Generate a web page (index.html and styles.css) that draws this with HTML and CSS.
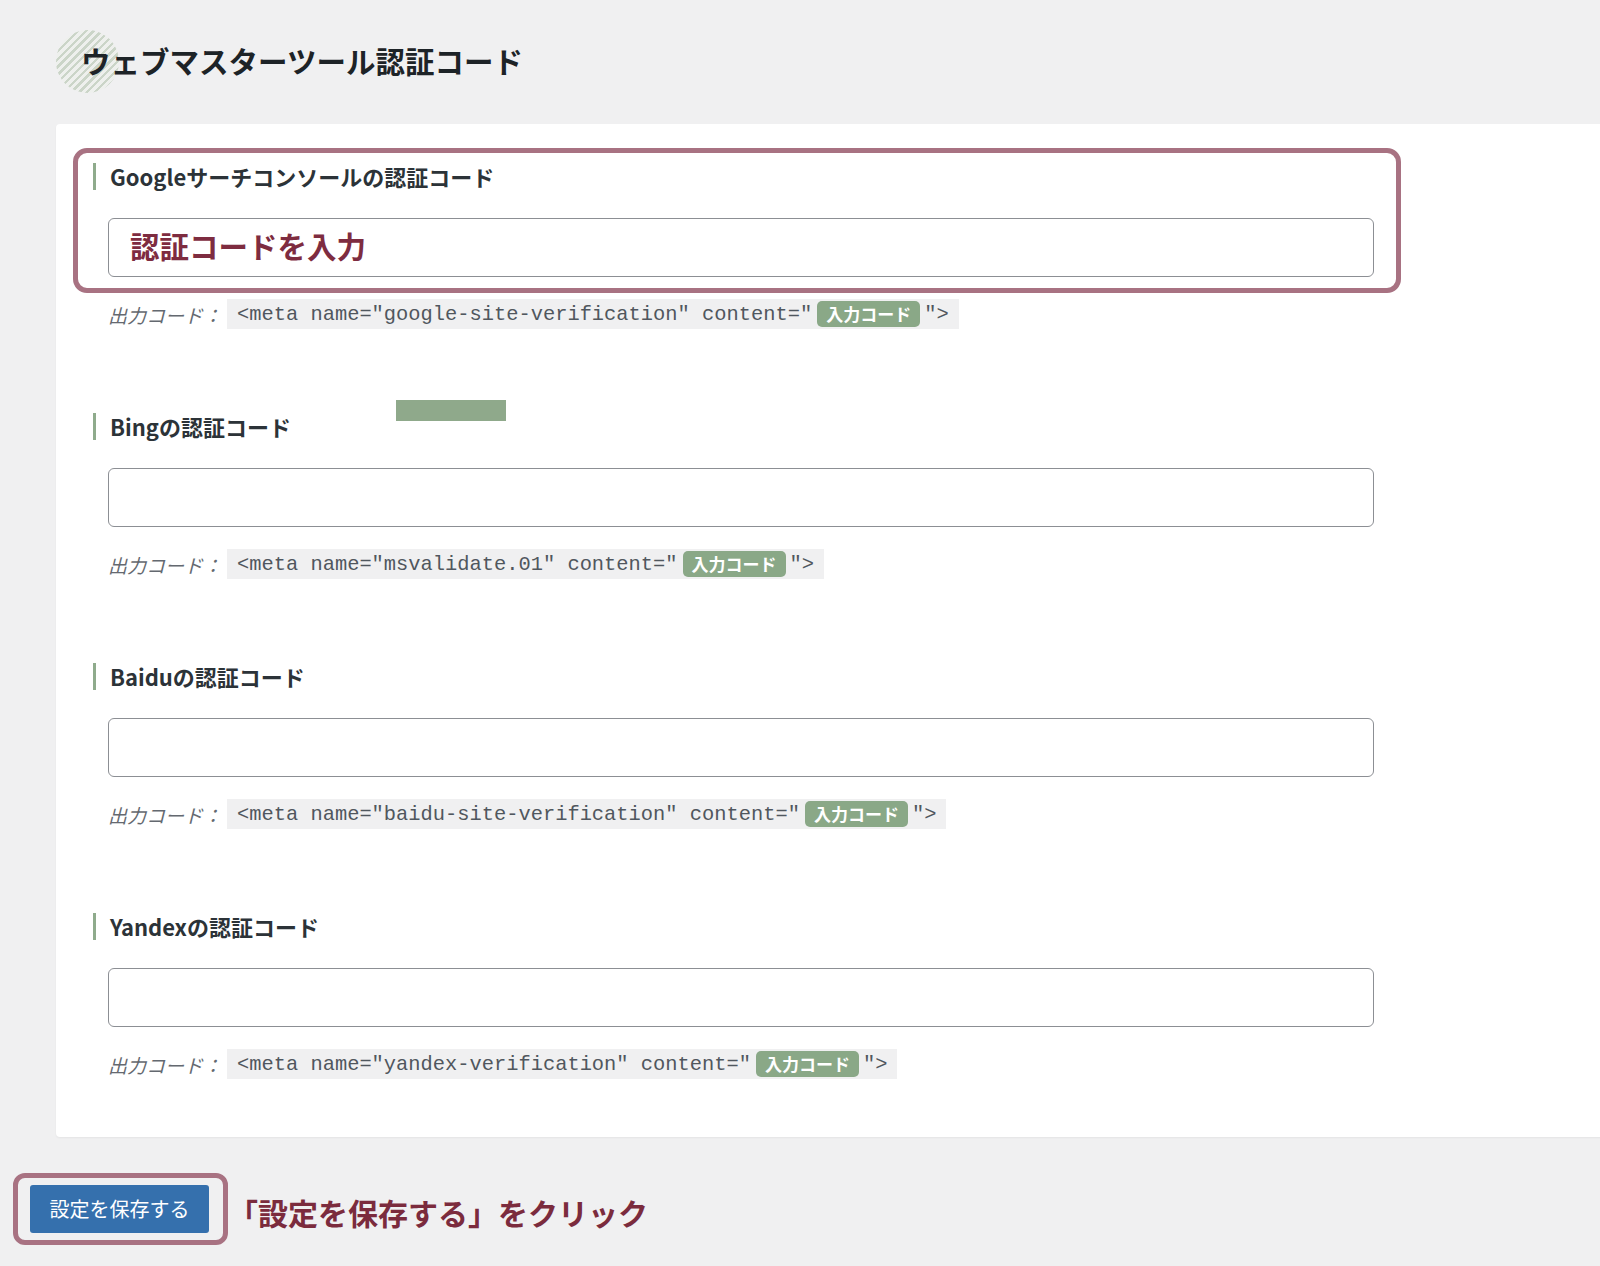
FILE: index.html
```html
<!DOCTYPE html>
<html lang="ja">
<head>
<meta charset="utf-8">
<title>ウェブマスターツール認証コード</title>
<link rel="stylesheet" href="styles.css">
</head>
<body>
<div class="page">
  <h1 class="title">ウェブマスターツール認証コード</h1>

  <div class="card">
    <div class="group">
      <div class="field highlight">
        <div class="field-label">Googleサーチコンソールの認証コード</div>
        <div class="input"><span class="typed">認証コードを入力</span></div>
      </div>
      <div class="output">
        <span class="output-label">出力コード：</span><span class="code">&lt;meta name="google-site-verification" content="<span class="badge">入力コード</span>"&gt;</span>
      </div>
    </div>

    <div class="group">
      <div class="field">
        <div class="field-label">Bingの認証コード</div>
        <div class="input"></div>
      </div>
      <div class="output">
        <span class="output-label">出力コード：</span><span class="code">&lt;meta name="msvalidate.01" content="<span class="badge">入力コード</span>"&gt;</span>
      </div>
    </div>

    <div class="group">
      <div class="field">
        <div class="field-label">Baiduの認証コード</div>
        <div class="input"></div>
      </div>
      <div class="output">
        <span class="output-label">出力コード：</span><span class="code">&lt;meta name="baidu-site-verification" content="<span class="badge">入力コード</span>"&gt;</span>
      </div>
    </div>

    <div class="group">
      <div class="field">
        <div class="field-label">Yandexの認証コード</div>
        <div class="input"></div>
      </div>
      <div class="output">
        <span class="output-label">出力コード：</span><span class="code">&lt;meta name="yandex-verification" content="<span class="badge">入力コード</span>"&gt;</span>
      </div>
    </div>
  </div>

  <div class="actions">
    <div class="btn-frame"><button class="btn">設定を保存する</button></div>
    <span class="note">「設定を保存する」をクリック</span>
  </div>

  <div class="mark"></div>
</div>
</body>
</html>
```

FILE: styles.css
```css
* { box-sizing: border-box; }

html, body {
  margin: 0;
  padding: 0;
  background: #f0f0f1;
  font-family: "Noto Sans", "Noto Sans CJK JP", sans-serif;
  color: #1d2327;
}

.page {
  position: relative;
  width: 1600px;
  min-height: 1266px;
  padding-top: 30px;
  overflow: hidden;
}

.title {
  position: relative;
  z-index: 0;
  margin: 0 0 31px 55px;
  height: 63px;
  padding-left: 26px;
  padding-bottom: 3px;
  display: flex;
  align-items: center;
  font-family: "Noto Sans CJK JP", sans-serif;
  font-size: 29.5px;
  font-weight: 700;
  color: #1d2327;
}

.title::before {
  content: "";
  position: absolute;
  z-index: -1;
  left: 1px;
  top: 0;
  width: 63px;
  height: 63px;
  border-radius: 50%;
  background: repeating-linear-gradient(-45deg, #cbd5c8 0 2.5px, #eef0ed 2.5px 5.5px);
}

.card {
  margin-left: 56px;
  width: 1560px;
  background: #ffffff;
  border-radius: 4px 0 0 4px;
  box-shadow: 0 1px 2px rgba(0, 0, 0, 0.05);
  padding: 24px 0 58px 17px;
}

.group + .group {
  margin-top: 69px;
}

.field {
  width: 1328px;
  border: 5px solid transparent;
  border-radius: 14px;
  padding: 10px 22px 11px 15px;
}

.field.highlight {
  border-color: #a87282;
}

.field-label {
  border-left: 3px solid #8fab8c;
  padding-left: 14px;
  height: 27px;
  line-height: 27px;
  font-family: "Noto Sans CJK JP", sans-serif;
  font-size: 22px;
  font-weight: 700;
  color: #2c3338;
}

.input {
  margin: 28px 0 0 15px;
  width: 1266px;
  height: 59px;
  border: 1.5px solid #8c8f94;
  border-radius: 6px;
  background: #fff;
  padding-left: 21px;
  padding-bottom: 3px;
  display: flex;
  align-items: center;
}

.typed {
  font-family: "Noto Sans CJK JP", sans-serif;
  font-size: 29.5px;
  font-weight: 700;
  color: #7e2c40;
  line-height: 1;
}

.output {
  margin-top: 6px;
  padding-left: 35px;
  height: 30px;
  display: flex;
  align-items: center;
}

.output-label {
  font-family: "Noto Sans CJK JP", sans-serif;
  font-style: italic;
  font-size: 19px;
  color: #646970;
  margin-right: 5px;
}

.code {
  display: inline-flex;
  align-items: center;
  height: 30px;
  padding: 0 10px;
  background: #f0f0f1;
  font-family: "Liberation Mono", "Noto Sans CJK JP", monospace;
  font-size: 20.4px;
  color: #50575e;
  white-space: pre;
}

.badge {
  display: inline-block;
  margin: 0 4px 0 5px;
  height: 26px;
  line-height: 26px;
  padding: 0 9px;
  border-radius: 5px;
  background: #8aa887;
  color: #ffffff;
  font-family: "Noto Sans CJK JP", sans-serif;
  font-weight: 700;
  font-size: 17px;
}

.actions {
  margin: 36px 0 0 13px;
  display: flex;
  align-items: center;
}

.btn-frame {
  border: 5px solid #a87282;
  border-radius: 12px;
  padding: 7px 14px 7px 12px;
}

.btn {
  display: block;
  width: 179px;
  height: 48px;
  border: 0;
  border-radius: 3px;
  background: #3570ad;
  color: #ffffff;
  font-family: "Noto Sans CJK JP", sans-serif;
  font-size: 20px;
  padding: 0 0 2px;
}

.note {
  margin: 6px 0 0 0;
  font-family: "Noto Sans CJK JP", sans-serif;
  font-size: 30px;
  font-weight: 700;
  color: #7b2b3d;
}

.mark {
  position: absolute;
  left: 396px;
  top: 400px;
  width: 110px;
  height: 21px;
  background: #8fa98b;
}
```
